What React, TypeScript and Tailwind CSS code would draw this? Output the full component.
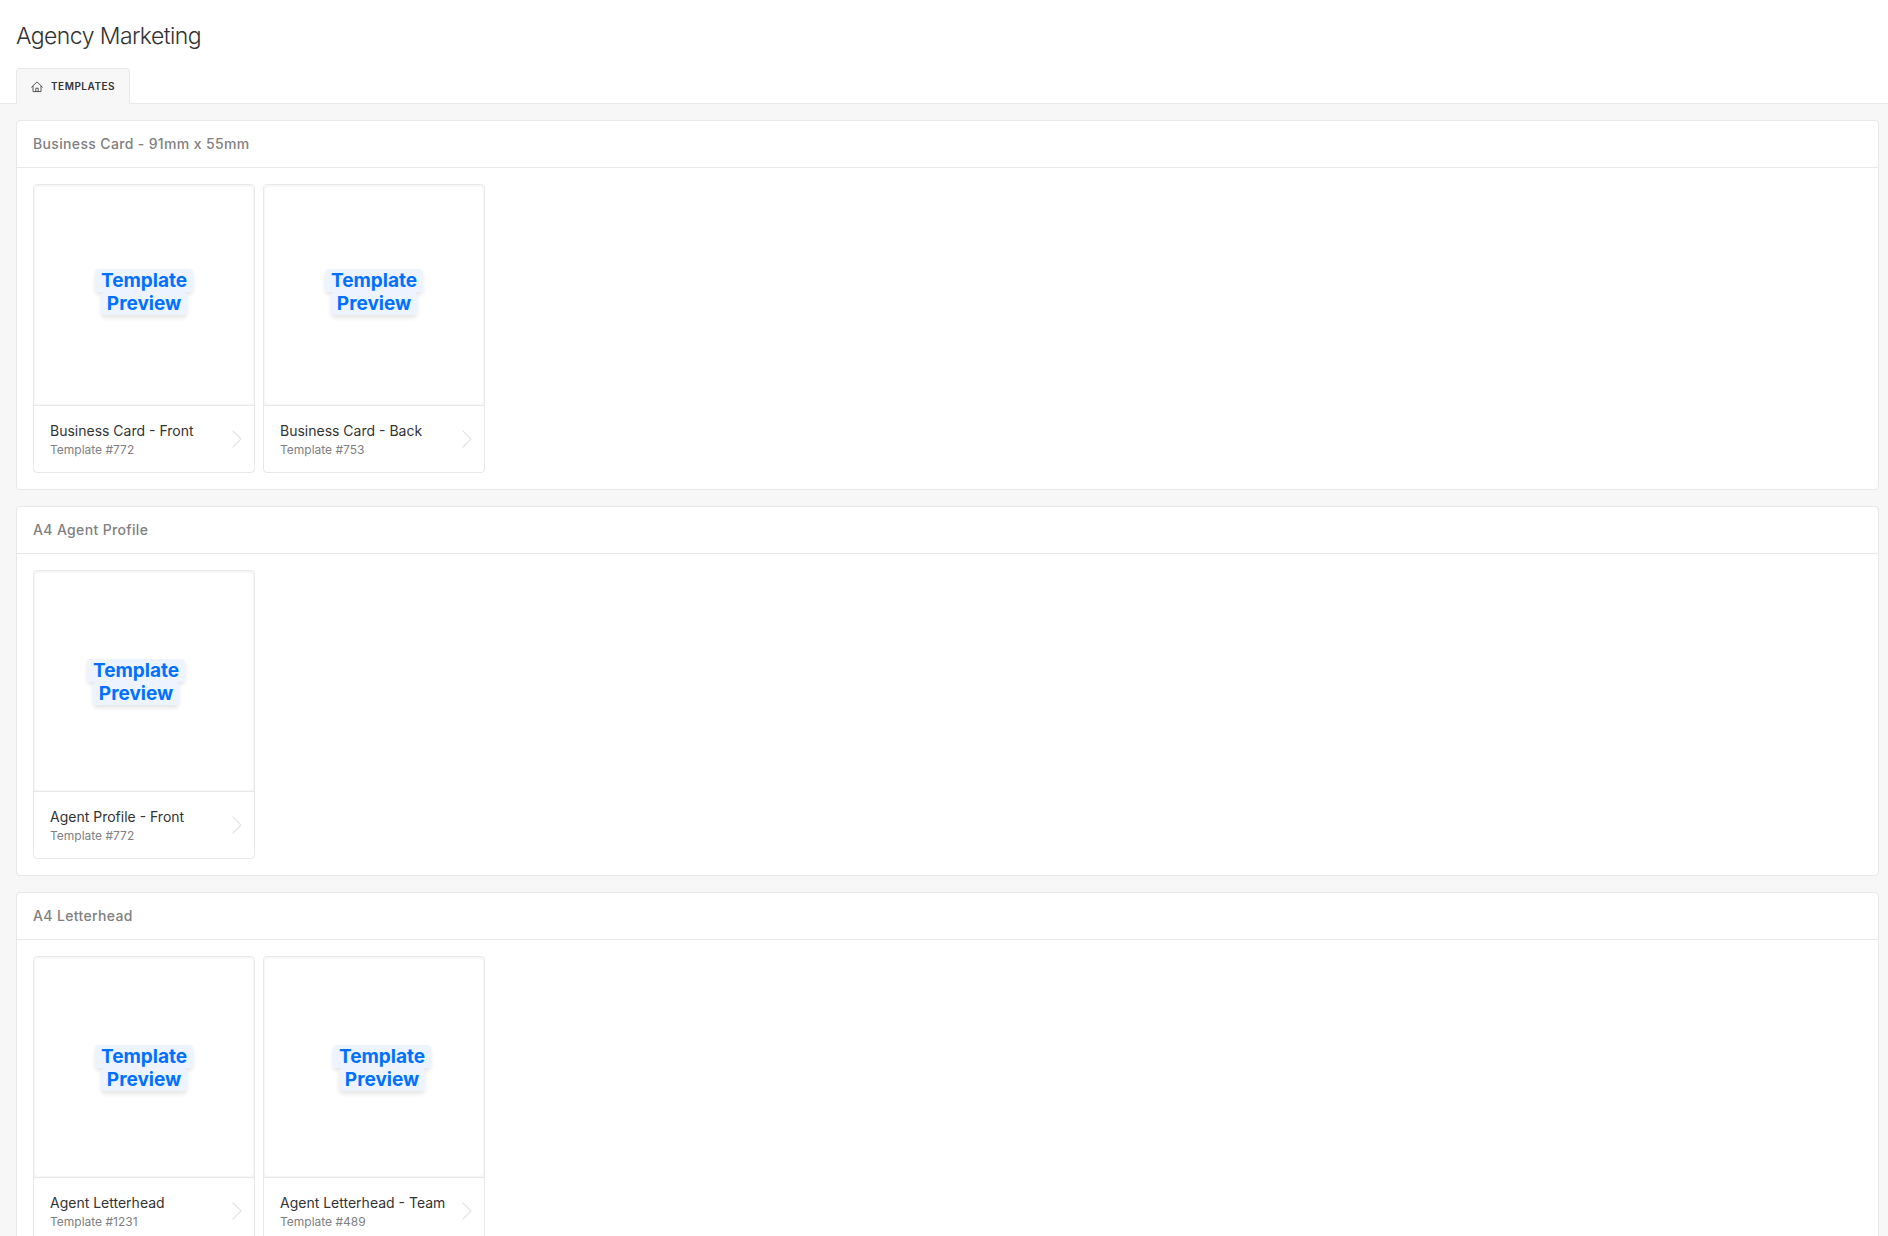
import React from 'react';

type Template = {
  name: string;
  number: number;
  align?: 'left' | 'center' | 'right' | 'top';
};

type Group = {
  title: string;
  templates: Template[];
};

const groups: Group[] = [
  {
    title: 'Business Card - 91mm x 55mm',
    templates: [
      { name: 'Business Card - Front', number: 772, align: 'top' },
      { name: 'Business Card - Back', number: 753, align: 'top' },
    ],
  },
  {
    title: 'A4 Agent Profile',
    templates: [{ name: 'Agent Profile - Front', number: 772, align: 'left' }],
  },
  {
    title: 'A4 Letterhead',
    templates: [
      { name: 'Agent Letterhead', number: 1231 },
      { name: 'Agent Letterhead - Team', number: 489, align: 'right' },
    ],
  },
];

const previewAlign = {
  left: 'pr-4',
  center: '',
  right: 'pl-4',
  top: 'pb-2',
};

const HomeIcon: React.FC = () => (
  <svg className="w-3 h-3" viewBox="0 0 12 12" fill="none" stroke="currentColor" strokeWidth="0.8" strokeLinejoin="round" strokeLinecap="round" aria-hidden="true">
    <path d="M0.6 6.2 L6 0.9 L11.4 6.2" />
    <path d="M2 5.2 V10.6 H10 V5.2" />
    <path d="M4.8 10.6 V7.2 H7.2 V10.6" />
  </svg>
);

const TemplateCard: React.FC<{ template: Template }> = ({ template }) => (
  <a href="#template" className="block w-[222px] border border-[#e8e8e8] rounded bg-white">
    <div className="h-[221px] px-px pt-0.5 pb-px bg-[#f7f7f7] border-b border-[#e8e8e8] rounded-t">
      <div className={`h-full flex items-center justify-center bg-white rounded ${previewAlign[template.align ?? 'center']}`}>
        <p className="w-28 text-center text-[19px] leading-[23px] font-bold text-[#0070ff]">
          <span className="box-decoration-clone bg-[#edf3ff] rounded px-1.5 shadow-[0_3px_4px_rgba(0,0,0,0.1)]">
            Template Preview
          </span>
        </p>
      </div>
    </div>
    <div className="h-[66px] pl-4 pr-3 flex items-center justify-between">
      <div className="pt-0.5">
        <h3 className="text-sm leading-5 text-[#333]">{template.name}</h3>
        <p className="text-xs leading-[18px] text-[#808080]">Template #{template.number}</p>
      </div>
      <svg className="w-[10px] h-[18px] text-[#e4e4e4]" viewBox="0 0 10 18" fill="none" stroke="currentColor" aria-hidden="true">
        <path strokeWidth="1.2" strokeLinecap="round" strokeLinejoin="round" d="M1 1l8 8-8 8" />
      </svg>
    </div>
  </a>
);

const App: React.FC = () => {
  return (
    <div className="min-h-screen bg-[#f7f7f7] font-['Inter','Liberation_Sans',sans-serif]">
      <header className="bg-white border-b border-[#e8e8e8] px-4 pt-5">
        <h1 className="text-[23px] leading-8 font-light tracking-tight text-[#333]">Agency Marketing</h1>
        <nav className="mt-4 flex">
          <a
            href="#templates"
            className="-mb-px h-9 px-3.5 flex items-center gap-2 bg-[#f7f7f7] border border-b-0 border-[#e8e8e8] rounded-t text-[10px] font-semibold tracking-wider text-[#333]"
          >
            <HomeIcon />
            TEMPLATES
          </a>
        </nav>
      </header>

      <main className="pl-4 pr-[9px] py-4 space-y-4">
        {groups.map((group) => (
          <section key={group.title} className="bg-white border border-[#e8e8e8] rounded">
            <h2 className="px-4 py-3 text-sm leading-[22px] font-medium tracking-wide text-[#808080] border-b border-[#e8e8e8]">
              {group.title}
            </h2>
            <div className="p-4 flex flex-wrap gap-2">
              {group.templates.map((template) => (
                <TemplateCard key={template.name} template={template} />
              ))}
            </div>
          </section>
        ))}
      </main>
    </div>
  );
};

export default App;
